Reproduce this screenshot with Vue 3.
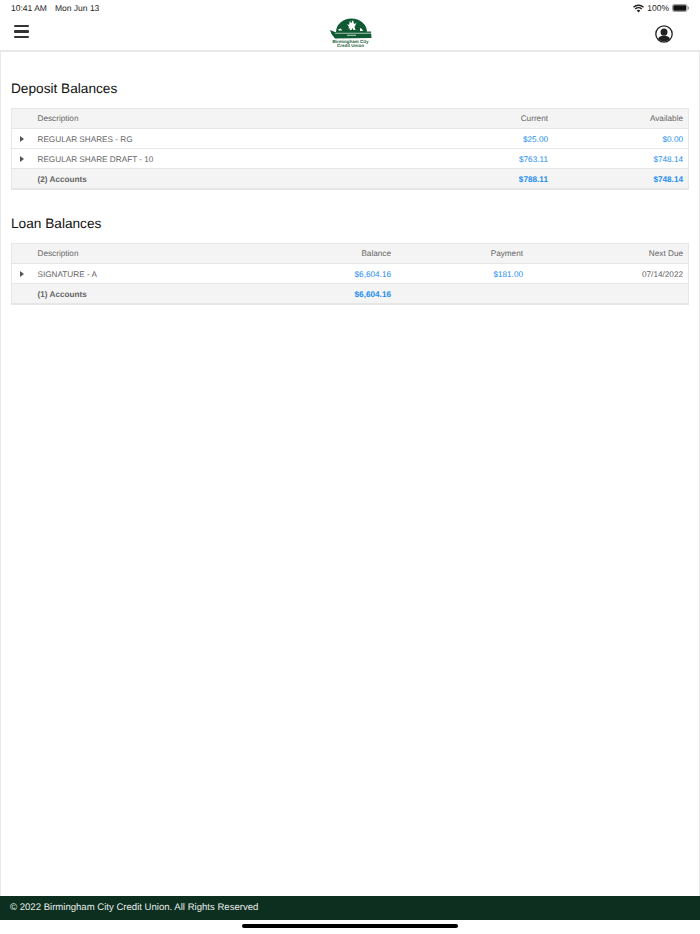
<template>
  <div class="screen">
    <div class="status-bar">
      <span class="clock">10:41 AM</span>
      <span class="date">Mon Jun 13</span>
      <div class="status-right">
        <svg class="wifi" width="11" height="9" viewBox="0 0 22 17">
          <path d="M11 16.5 7.4 12.6a5.2 5.2 0 0 1 7.2 0z" fill="#222" />
          <path d="M3.500 8.500a11 11 0 0 1 15 0l-2 2.100a8 8 0 0 0-11 0z" fill="#222" />
          <path d="M0 4.900a16 16 0 0 1 22 0l-2 2.100a13 13 0 0 0-18 0z" fill="#222" />
        </svg>
        <span>100%</span>
        <svg class="battery" width="17" height="8" viewBox="0 0 17 8">
          <rect x="0.500" y="0.500" width="14.500" height="7" rx="1.800" fill="#fff" stroke="#999" />
          <rect x="1.300" y="1.300" width="12.900" height="5.400" rx="1" fill="#111" />
          <rect x="15.700" y="2.500" width="1.300" height="3" rx="0.600" fill="#999" />
        </svg>
      </div>
    </div>

    <header class="nav">
      <button class="menu-btn" aria-label="Menu">
        <span></span><span></span><span></span>
      </button>
      <div class="logo">
        <svg width="44" height="22" viewBox="0 0 44 22">
          <path d="M7 14a15.500 13.500 0 0 1 31 0z" fill="#0f5a32" />
          <path d="M20 9l-2-3 2 1 1-4.500 1 3 2-3.500 1 4 2.500-1-2 4 1 3h-2l-1-2-1 2h-2l1-2-2 1z" fill="#fff" />
          <path d="M9 11.500l3-1 1 2h-3zM31 10l2 1 1 2h-3z" fill="#fff" />
          <path d="M1 12l5 2 36-.5.5 6.500L6 20.500 2.500 16z" fill="#0f5a32" />
          <rect x="6" y="14.800" width="36" height=".8" fill="#cfe0d5" />
          <rect x="18" y="16.800" width="9" height="1" fill="#b9d3c3" />
        </svg>
        <span class="logo-text">Birmingham City<br />Credit Union</span>
      </div>
      <svg class="profile" width="18" height="18" viewBox="0 0 18 18">
        <defs>
          <clipPath id="ring"><circle cx="9" cy="9" r="7.600" /></clipPath>
        </defs>
        <circle cx="9" cy="9" r="8.200" fill="#fff" stroke="#222" stroke-width="1.300" />
        <g clip-path="url(#ring)" fill="#222">
          <circle cx="9" cy="7" r="3.500" />
          <path d="M2 18c0-5 3-7.500 7-7.500s7 2.500 7 7.500z" />
        </g>
      </svg>
    </header>

    <main class="content">
      <section v-for="group in groups" :key="group.title" class="group">
        <h2>{{ group.title }}</h2>
        <div class="table">
          <div class="row head" :class="group.cols">
            <span></span>
            <span>Description</span>
            <span v-for="h in group.heads" :key="h" class="num">{{ h }}</span>
          </div>
          <div v-for="row in group.rows" :key="row.name" class="row" :class="group.cols">
            <span class="arrow"></span>
            <span>{{ row.name }}</span>
            <span v-for="(v, i) in row.values" :key="i" class="num" :class="{ money: v.startsWith('$') }">{{ v }}</span>
          </div>
          <div class="row total" :class="group.cols">
            <span></span>
            <span>{{ group.total.name }}</span>
            <span v-for="(v, i) in group.total.values" :key="i" class="num money">{{ v }}</span>
          </div>
        </div>
      </section>
    </main>

    <footer class="footer">© 2022 Birmingham City Credit Union. All Rights Reserved</footer>
    <div class="home-area"><div class="home-bar"></div></div>
  </div>
</template>

<script setup>
const groups = [
  {
    title: 'Deposit Balances',
    cols: 'deposit',
    heads: ['Current', 'Available'],
    rows: [
      { name: 'REGULAR SHARES - RG', values: ['$25.00', '$0.00'] },
      { name: 'REGULAR SHARE DRAFT - 10', values: ['$763.11', '$748.14'] },
    ],
    total: { name: '(2) Accounts', values: ['$788.11', '$748.14'] },
  },
  {
    title: 'Loan Balances',
    cols: 'loan',
    heads: ['Balance', 'Payment', 'Next Due'],
    rows: [
      { name: 'SIGNATURE - A', values: ['$6,604.16', '$181.00', '07/14/2022'] },
    ],
    total: { name: '(1) Accounts', values: ['$6,604.16', '', ''] },
  },
]
</script>

<style>
html,
body {
  margin: 0;
  background: #fff;
}
</style>

<style scoped>
.screen {
  width: 700px;
  height: 934px;
  display: flex;
  flex-direction: column;
  font-family: "Liberation Sans", Arial, sans-serif;
  text-rendering: geometricPrecision;
  color: #666;
  overflow: hidden;
}

.status-bar {
  height: 16px;
  display: flex;
  align-items: center;
  gap: 8px;
  padding: 0 11px;
  font-size: 8.500px;
  color: #222;
}

.status-right {
  display: flex;
  align-items: center;
  gap: 3px;
  margin-left: auto;
}

.nav {
  height: 36px;
  box-sizing: border-box;
  display: grid;
  grid-template-columns: 1fr auto 1fr;
  align-items: center;
  padding: 0 27px 0 14px;
  border-bottom: 2px solid #e8e8e8;
}

.menu-btn {
  width: 15px;
  height: 13.500px;
  margin-top: -3px;
  padding: 0;
  border: 0;
  background: none;
  display: flex;
  flex-direction: column;
  justify-content: space-between;
}

.menu-btn span {
  display: block;
  height: 2.500px;
  border-radius: 1px;
  background: #333;
}

.logo {
  display: flex;
  flex-direction: column;
  align-items: center;
  margin-left: 14px;
}

.logo svg {
  display: block;
}

.logo-text {
  font-size: 4.500px;
  line-height: 4.500px;
  font-weight: 700;
  color: #1f5f3c;
  text-align: center;
}

.profile {
  justify-self: end;
  margin-top: 1px;
}

.content {
  flex: 1;
  padding: 0 10px;
  border-left: 1px solid #e8e8e8;
  border-right: 1px solid #e8e8e8;
}

.group {
  margin-top: 24px;
}

.group:first-child {
  margin-top: 27px;
}

.group h2 {
  margin: 0 0 10px;
  padding-top: 1px;
  font-size: 13.670px;
  line-height: 18px;
  font-weight: 400;
  color: #111;
}

.table {
  border: 1px solid #e6e6e6;
  border-bottom-width: 2px;
}

.row {
  display: grid;
  height: 20px;
  box-sizing: border-box;
  align-items: center;
  font-size: 8.200px;
  border-top: 1px solid #e6e6e6;
  padding: 1px 5px 0 0;
}

.row:first-child {
  height: 19px;
  padding-top: 0;
  border-top: 0;
}

.deposit {
  grid-template-columns: 25.500px 1fr 120px 135px;
}

.loan {
  grid-template-columns: 25.500px 1fr 100px 132px 160px;
}

.head,
.total {
  background: #f4f4f4;
}

.total {
  font-weight: 700;
}

.num {
  text-align: right;
}

.money {
  color: #1e8ef0;
}

.arrow {
  width: 0;
  height: 0;
  margin-left: 7.500px;
  border-left: 4.500px solid #555;
  border-top: 3px solid transparent;
  border-bottom: 3px solid transparent;
}

.footer {
  height: 24px;
  line-height: 24px;
  padding-left: 10px;
  background: #0c2f20;
  color: #e8ece9;
  font-size: 9.570px;
}

.home-area {
  height: 14px;
  position: relative;
}

.home-bar {
  position: absolute;
  left: 242px;
  top: 4px;
  width: 216px;
  height: 4px;
  border-radius: 2px;
  background: #000;
}
</style>
